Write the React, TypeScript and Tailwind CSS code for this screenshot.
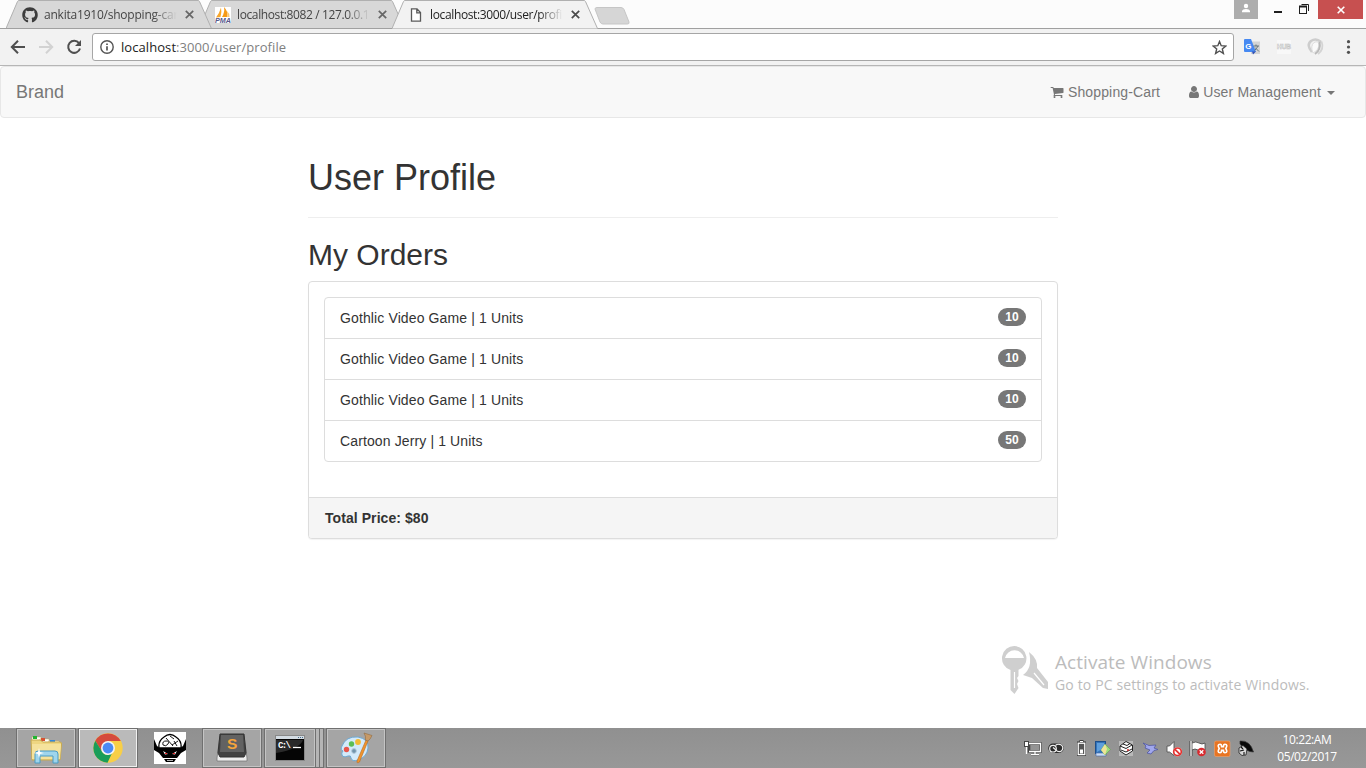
import React from "react";
import { FaGithub } from "react-icons/fa";

const ui = "font-['Open_Sans','Noto_Sans',sans-serif]";

function CloseX({ color }: { color: string }) {
  return (
    <svg width="9" height="9" viewBox="0 0 9 9" className="shrink-0">
      <path d="M0.8 0.8L8.2 8.2M8.2 0.8L0.8 8.2" stroke={color} strokeWidth="1.7" />
    </svg>
  );
}

function Tab({
  title,
  icon,
  active,
  className,
  textClass,
}: {
  title: string;
  icon: React.ReactNode;
  active?: boolean;
  className: string;
  textClass: string;
}) {
  const fill = active ? "#f2f2f2" : "#d8d8d8";
  return (
    <div className={`relative h-[29px] w-[206px] shrink-0 ${className}`}>
      <svg width="206" height="29" viewBox="0 0 206 29" className="absolute inset-0">
        <path d="M0 28.5L11.5 1.5Q12 0.5 13 0.5H192Q193 0.5 193.5 1.5L205.5 28.5Z" fill={fill} />
        <path
          d="M0 28.5L11.5 1.5Q12 0.5 13 0.5H192Q193 0.5 193.5 1.5L205.5 28.5"
          fill="none"
          stroke="#b0b0b0"
        />
        {!active && <path d="M0 28.5H206" stroke="#a0a0a0" />}
      </svg>
      <div className="relative flex h-[29px] items-center pl-4">
        <span className="flex w-4 justify-center">{icon}</span>
        <span
          className={`${ui} ml-[6px] w-[133px] text-[12px] leading-[28px] whitespace-nowrap [mask-image:linear-gradient(to_right,#000_82%,transparent)] ${textClass}`}
        >
          {title}
        </span>
        <span className="ml-[8px]">
          <CloseX color={active ? "#4a4a4a" : "#666"} />
        </span>
      </div>
    </div>
  );
}

function TabStrip() {
  return (
    <div className="flex h-[29px] items-start border-b border-[#a0a0a0] bg-[#fcfcfc] pl-[6px]">
      <Tab
        className="z-10"
        textClass="tracking-[-0.22px] text-[#444]"
        title="ankita1910/shopping-car"
        icon={<FaGithub size={16} color="#3c3c3c" />}
      />
      <Tab
        className="-ml-[13px]"
        textClass="tracking-[-0.38px] text-[#444]"
        title="localhost:8082 / 127.0.0.1"
        icon={
          <svg width="16" height="16" viewBox="0 0 16 16">
            <rect width="16" height="16" fill="#fff" />
            <path d="M6 0.5Q7 5 5.5 10L1 10.5Q4.5 6 6 0.5Z" fill="#f8a72c" />
            <path d="M9 0Q13 4 12.5 10H7Q10 5 9 0Z" fill="#f59a18" />
            <path d="M12 4Q14.5 6 14.5 10H13Z" fill="#fbc66f" />
            <text x="0" y="15.8" fontSize="6.8" fontWeight="bold" fontStyle="italic" fontFamily="Liberation Sans" fill="#57578b" textLength="16" lengthAdjust="spacingAndGlyphs">PMA</text>
          </svg>
        }
      />
      <Tab
        active
        className="z-20 -ml-[13px]"
        textClass="tracking-[-0.36px] text-[#222]"
        title="localhost:3000/user/profi"
        icon={
          <svg width="12" height="14" viewBox="0 0 12 14">
            <path d="M1.5 0.8H7L10.5 4.5V13.2H1.5ZM6.8 0.8V4.8H10.5" fill="#fff" stroke="#5a5a5a" strokeWidth="1.3" />
          </svg>
        }
      />
      <svg width="36" height="18" viewBox="0 0 36 18" className="mt-[7px] -ml-[4px]">
        <path d="M3 0.5H27Q29 0.5 30 2.5L35 15Q35.5 17 33.5 17H9Q7 17 6 15L1 2Q1 0.5 3 0.5Z" fill="#d6d6d6" stroke="#c6c6c6" />
      </svg>
      <div className="ml-auto flex items-start">
        <div className="flex h-[19px] w-6 justify-center bg-[#adadad] pt-[3px]">
          <svg width="10" height="10" viewBox="0 0 10 10">
            <circle cx="5" cy="3" r="2.2" fill="#fff" />
            <path d="M1 9.3V8Q1.6 6 5 6T9 8V9.3Z" fill="#fff" />
          </svg>
        </div>
        <svg width="60" height="19" viewBox="0 0 60 19">
          <rect x="16" y="11" width="8" height="2" fill="#1f1f1f" />
          <path d="M43.5 4.5H50.5V11" fill="none" stroke="#1f1f1f" />
          <rect x="41.5" y="6.5" width="7" height="7" fill="none" stroke="#1f1f1f" />
          <path d="M41 6.5H49" stroke="#1f1f1f" strokeWidth="2" />
        </svg>
        <div className="flex h-[19px] w-[45px] items-center justify-center bg-[#c75050]">
          <svg width="8" height="8" viewBox="0 0 8 8">
            <path d="M0.7 0.7L7.3 7.3M7.3 0.7L0.7 7.3" stroke="#fff" strokeWidth="1.6" />
          </svg>
        </div>
        <div className="w-[3px]" />
      </div>
    </div>
  );
}

function Toolbar() {
  return (
    <div className="flex h-[37px] items-center border-b border-[#b6b6b6] bg-[#f2f2f2]">
      <svg width="92" height="36" viewBox="0 0 92 36" className="shrink-0" fill="none">
        <path d="M25 18H12M18 11.7L11.8 18L18 24.3" stroke="#4f4f4f" strokeWidth="2" />
        <path d="M39 18H52M46 11.7L52.2 18L46 24.3" stroke="#d2d2d2" strokeWidth="2" />
        <path d="M79 14.2A6 6 0 1 0 80 19.5" stroke="#4f4f4f" strokeWidth="2" />
        <path d="M81 11V17H75Z" fill="#4f4f4f" />
      </svg>
      <div className="flex h-7 w-[1142px] shrink-0 items-center rounded-[3px] border border-[#a6a6a6] bg-white pr-[6px] pl-[7px]">
        <svg width="14" height="14" viewBox="0 0 14 14" fill="none">
          <circle cx="7" cy="7" r="6.2" stroke="#545454" strokeWidth="1.4" />
          <path d="M7 6.2V10.5M7 3.4V5" stroke="#545454" strokeWidth="1.7" />
        </svg>
        <span className={`${ui} ml-[7px] text-[13px] leading-6 tracking-[0.07px] text-[#808080]`}>
          <span className="text-[#222]">localhost</span>:3000/user/profile
        </span>
        <svg width="15" height="15" viewBox="0 0 15 15" className="ml-auto">
          <path d="M7.5 1.5L9.2 5.7L13.8 6L10.3 9L11.4 13.4L7.5 11L3.6 13.4L4.7 9L1.2 6L5.8 5.7Z" fill="none" stroke="#505050" strokeWidth="1.4" />
        </svg>
      </div>
      <svg width="132" height="36" viewBox="0 0 132 36" className="shrink-0">
        <rect x="17" y="12.5" width="9" height="12.5" fill="#d4d4d4" />
        <path d="M10 11Q10 10 11 10H17L22 23H11Q10 23 10 22Z" fill="#4689f2" />
        <path d="M18 22.5H22L19 25.5Z" fill="#3452b4" />
        <text x="11.3" y="19.5" fontSize="8" fontWeight="bold" fontFamily="Liberation Sans" fill="#fff">G</text>
        <path d="M19.5 17H25M22 15.5V17M24 17Q22.5 20 20.5 21.5M21 18.5L25 22.5" stroke="#66757a" fill="none" />
        <rect x="43" y="11" width="14" height="14" fill="#f8f8f8" />
        <text x="43" y="20.3" fontSize="7" fontWeight="bold" fontFamily="Liberation Sans" fill="#fff" stroke="#c2c2c2" strokeWidth="0.6" textLength="14" lengthAdjust="spacingAndGlyphs">HUB</text>
        <path d="M78 23Q72 16 77 12Q82 8.5 87 13" stroke="#cdcdcd" strokeWidth="2.6" fill="none" />
        <path d="M79 24Q76 17 80 13.5Q84 11.5 85 15Q85 21 79 24Z" fill="#fafafa" stroke="#dcdcdc" />
        <path d="M81 25Q87 21 85.5 13" stroke="#b8b8b8" strokeWidth="2" fill="none" />
        <path d="M84 25Q90.5 20 87.5 12.5" stroke="#d4d4d4" strokeWidth="1.8" fill="none" />
        <circle cx="114.5" cy="12.7" r="1.6" fill="#505050" />
        <circle cx="114.5" cy="18" r="1.6" fill="#505050" />
        <circle cx="114.5" cy="23.3" r="1.6" fill="#505050" />
      </svg>
    </div>
  );
}

function Navbar() {
  return (
    <nav className="flex h-[52px] items-center rounded-[4px] border border-[#e7e7e7] bg-[#f8f8f8] pr-[30px] pl-[15px] text-[14px] leading-5 text-[#777]">
      <a className="text-[18px]">Brand</a>
      <a className="ml-auto flex items-center tracking-[0.15px]">
        <svg width="14" height="14" viewBox="0 0 1792 1792" fill="#777" className="mr-[4px]">
          <path d="M704 1536q0 52-38 90t-90 38-90-38-38-90 38-90 90-38 90 38 38 90zm896 0q0 52-38 90t-90 38-90-38-38-90 38-90 90-38 90 38 38 90zm128-1088v512q0 24-16.5 42.5t-40.5 21.5l-1044 122q13 60 13 70 0 16-24 64h920q26 0 45 19t19 45-19 45-45 19h-1024q-26 0-45-19t-19-45q0-11 8-31.5t16-36 21.5-40 15.5-29.5l-177-823h-204q-26 0-45-19t-19-45 19-45 45-19h256q16 0 28.5 6.5t19.5 15.5 13 24.5 8 26 5.5 29.5 4.5 26h1201q26 0 45 19t19 45z" />
        </svg>
        Shopping-Cart
      </a>
      <a className="ml-[27px] flex items-center tracking-[0.18px]">
        <svg width="14" height="14" viewBox="0 0 1792 1792" fill="#777" className="mr-[2px]">
          <path d="M1536 1399q0 109-62.5 187t-150.5 78h-854q-88 0-150.5-78t-62.5-187q0-85 8.5-160.5t31.5-152 58.5-131 94-89 134.5-34.5q131 128 313 128t313-128q76 0 134.5 34.5t94 89 58.5 131 31.5 152 8.5 160.5zm-256-887q0 159-112.5 271.5t-271.5 112.5-271.5-112.5-112.5-271.5 112.5-271.5 271.5-112.5 271.5 112.5 112.5 271.5z" />
        </svg>
        User Management
        <span className="mt-px ml-[6px] border-x-4 border-t-4 border-x-transparent border-t-[#777]" />
      </a>
    </nav>
  );
}

const orders = [
  { title: "Gothlic Video Game", qty: 1, price: 10 },
  { title: "Gothlic Video Game", qty: 1, price: 10 },
  { title: "Gothlic Video Game", qty: 1, price: 10 },
  { title: "Cartoon Jerry", qty: 1, price: 50 },
];

function Profile() {
  return (
    <main className="mx-auto w-[750px] text-[14px] leading-5 text-[#333]">
      <h1 className="mt-10 text-[36px] leading-[40px]">User Profile</h1>
      <hr className="mt-[19px] border-t border-[#eee]" />
      <h2 className="mt-5 text-[30px] leading-[33px]">My Orders</h2>
      <section className="mt-[10px] rounded-[4px] border border-[#ddd] bg-white shadow-[0_1px_1px_rgba(0,0,0,0.05)]">
        <div className="p-[15px] pb-[35px]">
          <ul className="divide-y divide-[#ddd] rounded-[4px] border border-[#ddd]">
            {orders.map((o, i) => (
              <li key={i} className="flex h-[41px] items-start justify-between px-[15px] pt-[10px] last:h-10">
                <span className="tracking-[0.12px]">
                  {o.title} | {o.qty} Units
                </span>
                <span className="h-[18px] w-7 rounded-[10px] bg-[#777] text-center text-[12px] leading-[18px] font-bold text-white">
                  {o.price}
                </span>
              </li>
            ))}
          </ul>
        </div>
        <footer className="rounded-b-[3px] border-t border-[#ddd] bg-[#f5f5f5] px-4 py-[10px] font-bold tracking-[0.07px]">
          Total Price: $80
        </footer>
      </section>
    </main>
  );
}

function Watermark() {
  return (
    <div className={`absolute top-[644px] left-[1001px] flex ${ui} text-[#bcbcbc]`}>
      <svg width="49" height="52" viewBox="0 0 49 52">
        <path d="M28 8Q37 15 36 24L47 38V45L42 44L31 34L22 31Q32 24 28 8Z" fill="#cfcfcf" />
        <path d="M33 29L43 41" stroke="#fff" strokeWidth="1.2" />
        <circle cx="13.5" cy="15" r="14" fill="#fff" />
        <path d="M13.5 2A12.3 12.3 0 0 1 17.5 25.8V32L16 34L17.5 37L16 40L17.5 44L13.5 50L9.5 46V26A12.3 12.3 0 0 1 13.5 2Z" fill="#cfcfcf" />
        <path d="M4 14A9.7 9.7 0 0 1 23 14Z" fill="#fff" />
        <path d="M13.5 28V44" stroke="#fff" strokeWidth="1.2" />
      </svg>
      <div className="pt-[6px] pl-[5px] whitespace-nowrap">
        <div className="text-[19px] leading-6 tracking-[0.05px]">Activate Windows</div>
        <div className="text-[14px] leading-[22px] tracking-[0.14px]">Go to PC settings to activate Windows.</div>
      </div>
    </div>
  );
}

function TaskButton({
  children,
  className = "w-[60px] bg-[#a5a5a5] shadow-[inset_0_0_0_1px_#c4c4c4]",
}: {
  children: React.ReactNode;
  className?: string;
}) {
  return (
    <div className={`flex h-10 shrink-0 items-center justify-center border border-[#707070] ${className}`}>
      {children}
    </div>
  );
}

function Taskbar() {
  return (
    <footer className={`flex h-10 items-center bg-linear-to-b from-[#909090] to-[#989898] pl-4 ${ui}`}>
      <TaskButton>
        <svg width="34" height="32" viewBox="0 0 34 32">
          <path d="M3 5H12V9H3ZM11 7H20V11H11ZM20 9H30V13H20Z" fill="#fff" stroke="#c3ad63" strokeWidth="0.5" />
          <path d="M4 4H8V7H4Z" fill="#21b531" />
          <path d="M12 6H16V9H12Z" fill="#d85131" />
          <path d="M21 8H26V11H21Z" fill="#3589dc" />
          <path d="M2 8H11L14 10H31Q33 10 32.5 13L31 28H3Z" fill="#eed681" stroke="#c7aa50" />
          <path d="M3 12H32L31 27H3Z" fill="#f5e29c" />
          <path d="M6 31V22Q6 19 9 19H26Q29 19 29 22V31H24V24H11V31Z" fill="#9fd5ec" stroke="#4a9bc5" />
          <path d="M10 16L11 20L15 21L11 22L10 26L9 22L5 21L9 20Z" fill="#fff" />
        </svg>
      </TaskButton>
      <TaskButton className="ml-[2px] w-[60px] bg-[#bababa] shadow-[inset_0_0_0_1px_#f0f0f0]">
        <svg width="30" height="30" viewBox="0 0 30 30">
          <circle cx="15" cy="15" r="14.7" fill="#f8cf47" />
          <path d="M2.3 7.7A14.7 14.7 0 0 1 27.8 8H15L8.8 18.5Z" fill="#d54b3d" />
          <path d="M2.3 7.7L9 18.5Q11 22 15 22L20 18L14.5 29.7A14.7 14.7 0 0 1 2.3 7.7Z" fill="#199d59" />
          <circle cx="15" cy="15" r="7" fill="#f2f4f5" />
          <circle cx="15" cy="15" r="5.4" fill="#4a8af4" />
        </svg>
      </TaskButton>
      <svg width="32" height="32" viewBox="0 0 32 32" className="ml-4 shrink-0">
        <rect width="32" height="32" fill="#fff" />
        <path d="M0 7L3 14L6 16H26L29 14L32 7V18L27 21L23 26H9L5 21L0 18Z" fill="#000" />
        <path d="M10 27H22L20 30H12Z" fill="#000" />
        <path d="M5 16Q4 9 10 5Q16 0 22 5Q28 9 27 16Z" fill="#fff" stroke="#000" strokeWidth="1.3" />
        <path d="M9 13Q8 9 12 9T14 12Q12 15 9 13M20 9L23 14M18 13L24 9M12 6L19 14M16 4L20 7" fill="none" stroke="#000" strokeWidth="0.9" />
        <path d="M9 19L14 22L11 22.5ZM23 19L18 22L21 22.5Z" fill="#fff" />
        <path d="M11 21.5H13M19 21.5H21" stroke="#e22" />
        <path d="M13 28.5H19" stroke="#fff" strokeWidth="0.7" />
      </svg>
      <TaskButton className="ml-4 w-[60px] bg-[#a5a5a5] shadow-[inset_0_0_0_1px_#c4c4c4]">
        <svg width="32" height="30" viewBox="0 0 32 30" className="-mt-px">
          <path d="M3 10L4 3H28L31 25V28H1V25Z" fill="#eee" stroke="#777" strokeWidth="0.8" />
          <path d="M4 1H28L30 20L28 24H4L2 20Z" fill="#424242" stroke="#333" />
          <path d="M5 2H27L28 19H4Z" fill="#626262" />
          <text x="11" y="15.5" fontSize="15.5" fontWeight="bold" fontFamily="Liberation Sans" fill="#f5a43b">S</text>
        </svg>
      </TaskButton>
      <TaskButton className="ml-[2px] w-[52px] bg-[#a5a5a5] shadow-[inset_0_0_0_1px_#c4c4c4]">
        <svg width="30" height="26" viewBox="0 0 30 26">
          <rect x="0.5" y="0.5" width="29" height="25" fill="#050505" stroke="#888" />
          <rect x="1" y="1" width="28" height="3" fill="#d4dce3" />
          <path d="M23 2.5H28" stroke="#4c718f" strokeDasharray="1 1" />
          <path d="M1 5H28Q25 14 1 18Z" fill="#2a2a2a" />
          <text x="3" y="12.5" fontSize="9" fontFamily="Liberation Mono" fontWeight="bold" fill="#fff" textLength="13">C:\</text>
          <path d="M18 12.5H26" stroke="#fff" strokeWidth="1.3" />
        </svg>
      </TaskButton>
      <div className="h-10 w-1 shrink-0 border-y border-r border-[#707070] bg-[#b5b5b5]" />
      <div className="h-10 w-1 shrink-0 border-y border-r border-[#707070] bg-[#b5b5b5]" />
      <TaskButton className="ml-[2px] w-[60px] bg-[#a5a5a5] shadow-[inset_0_0_0_1px_#c4c4c4]">
        <svg width="34" height="32" viewBox="0 0 34 32">
          <path d="M3 14Q7 4 19 5Q30 7 29 16Q28 25 19 28Q13 30 12 26Q12 23 9 24Q4 26 3 23Q2 21 4 19Q1 18 3 14Z" fill="#d3eafa" stroke="#6faad4" />
          <circle cx="7.5" cy="17.5" r="2.7" fill="#e8554b" />
          <circle cx="12.5" cy="12" r="2.7" fill="#5cbe54" />
          <circle cx="19" cy="10" r="2.9" fill="#f3bb34" />
          <circle cx="15" cy="19" r="2.4" fill="#7195ad" stroke="#b6cbdc" />
          <path d="M27 8L29 9L20.5 30Q17.5 32 18 29Z" fill="#ef942e" stroke="#b86c22" strokeWidth="0.6" />
          <path d="M25 1L33 3.5Q31 8 29 9L26.5 8Q27 4 25 1Z" fill="#c79a68" stroke="#916b42" strokeWidth="0.6" />
        </svg>
      </TaskButton>
      <svg width="232" height="40" viewBox="0 0 232 40" className="ml-auto shrink-0" fill="none">
        <path d="M7 15.5H18.5V23.5H7V17M9 26.5H17M13 24V26" stroke="#444" strokeWidth="2.6" />
        <path d="M7 15.5H18.5V23.5H7M9 26.5H17M13 24V26M4.5 18V26" stroke="#fff" strokeWidth="1.3" />
        <rect x="2.5" y="13.5" width="4" height="5" fill="#fff" stroke="#444" />
        <path d="M32 16.3H37A3.9 3.9 0 0 1 37 24.2H31A3.9 3.9 0 0 1 31 16.3Z" fill="#2a2a2a" stroke="#2a2a2a" strokeWidth="1.6" />
        <circle cx="31" cy="20.7" r="3.3" stroke="#eee" strokeWidth="1.2" />
        <path d="M33.5 17.5Q35 16 37 16.3A3.7 3.7 0 1 1 34 22L31 19.5" stroke="#eee" strokeWidth="1.2" />
        <path d="M55 13.5H57.5V12H61.5V13.5H64V28H55Z" fill="#3a3a3a" />
        <path d="M58 13.5H61" stroke="#fff" />
        <rect x="56.2" y="15.2" width="6.6" height="11.4" fill="#555" stroke="#fff" strokeWidth="1.3" />
        <rect x="58" y="21.5" width="3" height="4" fill="#fff" />
        <rect x="73.5" y="13.5" width="10" height="12" fill="#3575bb" stroke="#1d4f8b" />
        <path d="M75 15H82V20L75 24Z" fill="#5f9fdc" />
        <path d="M74 25H84V28H74Z" fill="#c9dcf6" stroke="#4564a4" strokeWidth="0.6" />
        <path d="M83 16L88.5 21.5L83 27L79 22Z" fill="#9ddd7c" stroke="#5a9b4b" strokeWidth="0.5" />
        <path d="M83 16L85 21L83 27L79 22Z" fill="#eee498" />
        <rect x="97" y="13" width="14" height="15" fill="#b9b9b9" />
        <path d="M98 18L104 13.5L110.5 17V23L104 27L98 23Z" fill="#fff" stroke="#222" />
        <path d="M98 18L104 20.5L110 17M101 16L105 17.5L108 15.5M99 22L104 24L110 21" stroke="#222" />
        <path d="M105 22H107" stroke="#d22" strokeWidth="1.6" />
        <path d="M121 15L127 17.5L134 17L132 20L136 21.5L132 22.5L129 26L125 25L128 22L123 20L124 18Z" fill="#a1a8ee" stroke="#5058a2" strokeWidth="0.8" />
        <path d="M145 18H147.5L152 13.5V27.5L147.5 24H145Z" fill="#fff" stroke="#555" strokeWidth="0.9" />
        <circle cx="155.5" cy="23.8" r="4.6" fill="#fff" />
        <circle cx="155.5" cy="23.8" r="3.8" fill="#fff" stroke="#e43230" strokeWidth="1.7" />
        <path d="M153 21.3L158 26.3" stroke="#e43230" strokeWidth="1.7" />
        <path d="M169 13V28" stroke="#444" strokeWidth="3" />
        <path d="M170 15Q174 13 177 15T183 15V22Q179 24 176 22T170 22Z" fill="#fff" stroke="#444" strokeWidth="0.8" />
        <path d="M169 13V28" stroke="#fff" strokeWidth="1.3" />
        <circle cx="179.5" cy="24" r="4.3" fill="#d9292e" />
        <path d="M177.7 22.2L181.3 25.8M181.3 22.2L177.7 25.8" stroke="#fff" strokeWidth="1.3" />
        <rect x="192.5" y="13" width="15.5" height="15.5" rx="1.5" fill="#e87524" stroke="#f0a26c" strokeWidth="0.6" />
        <path d="M197.2 20.5Q194.8 16.3 198 16.3Q199.6 16.3 199.6 18.8H201.4Q201.4 16.3 203 16.3Q206.2 16.3 203.8 20.5Q206.2 24.8 203 24.8Q201.4 24.8 201.4 22.3H199.6Q199.6 24.8 198 24.8Q194.8 24.8 197.2 20.5Z" stroke="#fff" strokeWidth="1.6" />
        <path d="M218 13Q228 12 231.5 24Q224 24 218 16Z" fill="#080808" stroke="#333" strokeWidth="0.7" />
        <path d="M217 20L221 17.5L225 21L224 27L220 27.5L217 25Z" fill="#d8d8d8" stroke="#222" strokeWidth="0.8" />
        <path d="M218 23L222 22M222 24V27M219 19L221 21" stroke="#111" strokeWidth="1.1" />
      </svg>
      <div className="ml-[11px] w-[84px] shrink-0 text-center text-[12px] leading-[17px] tracking-[-0.42px] text-white">
        <div>10:22:AM</div>
        <div>05/02/2017</div>
      </div>
      <div className="w-[17px] shrink-0" />
    </footer>
  );
}

export default function App() {
  return (
    <div className="relative flex h-[768px] w-[1366px] flex-col overflow-hidden bg-white font-['Liberation_Sans',Arial,sans-serif]">
      <TabStrip />
      <Toolbar />
      <Navbar />
      <div className="flex-1">
        <Profile />
      </div>
      <Watermark />
      <Taskbar />
    </div>
  );
}
